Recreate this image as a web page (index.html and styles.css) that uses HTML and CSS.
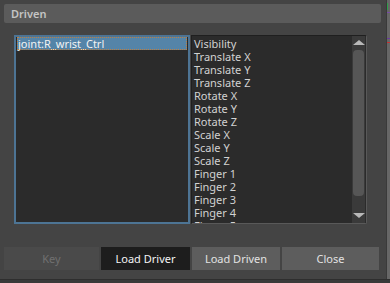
FILE: index.html
```html
<!DOCTYPE html>
<html lang="en">
  <head>
    <meta charset="UTF-8" />
    <title>Set Driven Key</title>
    <link rel="stylesheet" href="styles.css">
  </head>
  <body>
    <div class="screen">
      <div class="dialog">
        <div class="section-header">Driven</div>
        <div class="lists">
          <div class="list objects">
            <div class="item selected">joint:R_wrist_Ctrl</div>
          </div>
          <div class="list attrs">
            <div class="attr-items">
              <div class="item">Visibility</div>
              <div class="item">Translate X</div>
              <div class="item">Translate Y</div>
              <div class="item">Translate Z</div>
              <div class="item">Rotate X</div>
              <div class="item">Rotate Y</div>
              <div class="item">Rotate Z</div>
              <div class="item">Scale X</div>
              <div class="item">Scale Y</div>
              <div class="item">Scale Z</div>
              <div class="item">Finger 1</div>
              <div class="item">Finger 2</div>
              <div class="item">Finger 3</div>
              <div class="item">Finger 4</div>
              <div class="item">Finger 5</div>
            </div>
            <div class="scrollbar">
              <div class="arrow up"></div>
              <div class="thumb"></div>
              <div class="arrow down"></div>
            </div>
          </div>
        </div>
        <div class="buttons">
          <button class="btn disabled">Key</button>
          <button class="btn active">Load Driver</button>
          <button class="btn">Load Driven</button>
          <button class="btn">Close</button>
        </div>
      </div>
      <div class="viewport">
        <span class="mark green"></span>
        <span class="mark purple"></span>
        <span class="mark red"></span>
        <span class="mark purple2"></span>
      </div>
    </div>
    <div class="bottom-strip"></div>
  </body>
</html>
```

FILE: styles.css
```css
body {
  margin: 0;
  background: #444444;
  font-family: "Noto Sans", "Open Sans", sans-serif;
  font-size: 11px;
  color: #d2d2d2;
  overflow: hidden;
}
.screen {
  display: flex;
  height: 279px;
}
.dialog {
  width: 377px;
  padding: 4px;
  display: flex;
  flex-direction: column;
}
.section-header {
  height: 19px;
  line-height: 19px;
  background: #5b5b5b;
  border-radius: 2px;
  padding-left: 7px;
  font-weight: 600;
  color: #c4c4c4;
}
.lists {
  display: flex;
  margin: 12px 11px 0 10px;
  height: 189px;
  gap: 1px;
}
.list {
  background: #2b2b2b;
  box-sizing: border-box;
}
.objects {
  width: 176px;
  border: 2px solid #4d7494;
  padding: 0 1px;
}
.objects .item.selected {
  height: 13px;
  line-height: 13px;
  background: #5484a8;
  color: #f2f2f2;
  padding-left: 1px;
  outline: 1px dotted #c08040;
  outline-offset: -1px;
}
.attrs {
  width: 176px;
  display: flex;
  border: 1px solid #1f1f1f;
  border-right-color: #595959;
  border-bottom-color: #595959;
  border-radius: 0 2px 2px 0;
  overflow: hidden;
}
.attr-items {
  flex: 1;
  padding: 1px 0 0 2px;
}
.attr-items .item {
  height: 13px;
  line-height: 13px;
  white-space: nowrap;
}
.scrollbar {
  width: 13px;
  margin-right: 1px;
  background: #3a3a3a;
  display: flex;
  flex-direction: column;
  align-items: center;
}
.arrow {
  width: 0;
  height: 0;
  border-left: 6px solid transparent;
  border-right: 6px solid transparent;
}
.arrow.up {
  margin-top: 4px;
  border-bottom: 5px solid #b8b8b8;
}
.arrow.down {
  margin-bottom: 5px;
  border-top: 5px solid #b8b8b8;
}
.thumb {
  flex: 1;
  width: 11px;
  margin: 5px 0 17px;
  background: #565656;
  border-radius: 4px;
}
.buttons {
  display: flex;
  gap: 2px;
  margin-top: 23px;
}
.btn {
  height: 23px;
  border: none;
  padding: 0;
  font-family: inherit;
  font-size: 11px;
  color: #e2e2e2;
  background: #5d5d5d;
}
.btn:nth-child(1) { width: 95px; }
.btn:nth-child(2) { width: 89px; }
.btn:nth-child(3) { width: 88px; }
.btn:nth-child(4) { width: 97px; }
.btn.disabled {
  background: #4a4a4a;
  color: #707070;
}
.btn.active {
  background: #1d1d1d;
  color: #f4f4f4;
}
.viewport {
  flex: 1;
  margin-left: 1px;
  border-left: 1px solid #3a3a3a;
  background: #676767;
  position: relative;
}
.mark {
  position: absolute;
  left: 0;
  width: 5px;
  height: 1px;
}
.mark.green { top: 3px; height: 7px; width: 1px; background: #2fa04a; }
.mark.purple { top: 12px; background: #7a4aa8; }
.mark.red { top: 42px; background: #c83030; }
.mark.purple2 { top: 38px; background: #6a3aa0; }
.bottom-strip {
  height: 4px;
  background: #3a3a3a;
  border-top: 1px solid #2e2e2e;
}
```
